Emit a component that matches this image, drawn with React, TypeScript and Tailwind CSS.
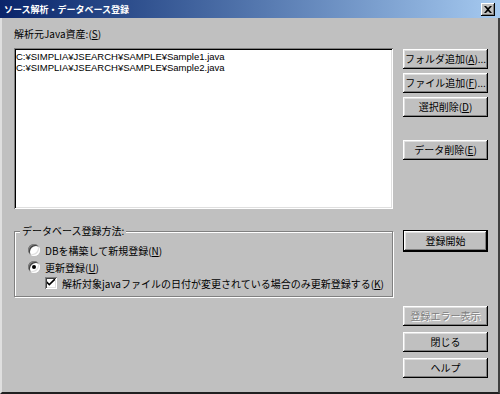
import React from "react"

const BTN =
  "h-[20px] w-[85px] flex items-center justify-center whitespace-nowrap bg-[#c0c0c0] text-[10px] leading-none text-black shadow-[inset_-1px_-1px_0_#000,inset_1px_1px_0_#fff,inset_-2px_-2px_0_#808080,inset_2px_2px_0_#dfdfdf]"

function Acc({ ch }: { ch: string }) {
  return (
    <>
      (<span className="underline underline-offset-1">{ch}</span>)
    </>
  )
}

function Button({ children, className = "", disabled = false }: { children: React.ReactNode; className?: string; disabled?: boolean }) {
  return (
    <div className={`${BTN} ${className}`}>
      <span className={disabled ? "text-[#808080] [text-shadow:1px_1px_0_#fff]" : ""}>{children}</span>
    </div>
  )
}

function Radio({ checked }: { checked?: boolean }) {
  return (
    <div className="w-[12px] h-[12px] rounded-full bg-white flex items-center justify-center shrink-0 shadow-[inset_1px_1px_0_#808080,inset_-1px_-1px_0_#fff,inset_2px_2px_0_#404040,inset_-2px_-2px_0_#dfdfdf]">
      {checked && <div className="w-[4px] h-[4px] rounded-full bg-black" />}
    </div>
  )
}

function Checkbox() {
  return (
    <div className="w-[12px] h-[12px] bg-white shrink-0 flex items-center justify-center shadow-[inset_1px_1px_0_#808080,inset_-1px_-1px_0_#fff,inset_2px_2px_0_#404040,inset_-2px_-2px_0_#dfdfdf]">
      <svg width="8" height="8" viewBox="0 0 7 7">
        <path d="M0 2 L0 4 L2 6 L7 1 L7 -1 L2 4 Z" fill="#000" />
      </svg>
    </div>
  )
}

export default function App() {
  return (
    <div className="w-[500px] h-[394px] bg-[#c0c0c0] flex flex-col overflow-hidden font-['Noto_Sans_CJK_JP',sans-serif] text-black whitespace-nowrap">
      {/* Title bar */}
      <div className="h-[18px] flex items-center justify-between bg-gradient-to-r from-[#0a246a] to-[#a6caf0] pl-[4px] pr-[5px]">
        <span className="text-white font-bold text-[9px] leading-none">ソース解析・データベース登録</span>
        <div className="w-[14px] h-[13px] bg-[#c0c0c0] flex items-center justify-center shadow-[inset_-1px_-1px_0_#000,inset_1px_1px_0_#fff,inset_-2px_-2px_0_#808080]">
          <svg width="8" height="7" viewBox="0 0 8 7">
            <path d="M0 0h2l2 2 2-2h2L5 3.5 8 7H6L4 5 2 7H0l3-3.5z" fill="#000" />
          </svg>
        </div>
      </div>

      {/* Body */}
      <div className="flex-1 flex border-l-2 border-l-[#dfdfdf] border-r-2 border-r-[#404040] border-b-2 border-b-[#202020]">
        {/* Left column */}
        <div className="ml-[12px] w-[379px] flex flex-col">
          <div className="mt-[9px] h-[14px] text-[10px] leading-[14px]">
            解析元Java資産:<Acc ch="S" />
          </div>
          <div className="mt-[7px] h-[161px] bg-white px-[2px] pt-[3px] font-['Liberation_Sans',sans-serif] text-[9.5px] leading-[11px] shadow-[inset_1px_1px_0_#808080,inset_-1px_-1px_0_#fff,inset_2px_2px_0_#000,inset_-2px_-2px_0_#dfdfdf]">
            <div className="h-[11px]">C:¥SIMPLIA¥JSEARCH¥SAMPLE¥Sample1.java</div>
            <div className="h-[11px]">C:¥SIMPLIA¥JSEARCH¥SAMPLE¥Sample2.java</div>
          </div>

          <div className="relative mt-[22px] h-[66px] border border-[#808080] shadow-[inset_1px_1px_0_#fff,1px_1px_0_#fff]">
            <div className="absolute -top-[8px] left-[5px] bg-[#c0c0c0] px-[2px] text-[10px] leading-[14px]">
              データベース登録方法:
            </div>
            <div className="mt-[11px] ml-[13px] flex items-center gap-[5px] h-[14px] text-[10px]">
              <Radio />
              <span>DBを構築して新規登録<Acc ch="N" /></span>
            </div>
            <div className="mt-[3px] ml-[13px] flex items-center gap-[5px] h-[14px] text-[10px]">
              <Radio checked />
              <span>更新登録<Acc ch="U" /></span>
            </div>
            <div className="mt-[2px] ml-[30px] flex items-center gap-[5px] h-[14px] text-[10px]">
              <Checkbox />
              <span>解析対象javaファイルの日付が変更されている場合のみ更新登録する<Acc ch="K" /></span>
            </div>
          </div>
        </div>

        {/* Right column */}
        <div className="ml-[10px] flex flex-col">
          <Button className="mt-[31px]">フォルダ追加<Acc ch="A" />...</Button>
          <Button className="mt-[4px]">ファイル追加<Acc ch="F" />...</Button>
          <Button className="mt-[4px]">選択削除<Acc ch="D" /></Button>
          <Button className="mt-[23px]">データ削除<Acc ch="E" /></Button>
          <div className="mt-[70px] w-[85px] h-[22px] border border-black">
            <Button className="!w-[83px]">登録開始</Button>
          </div>
          <Button className="mt-[54px]" disabled>登録エラー表示</Button>
          <Button className="mt-[6px]">閉じる</Button>
          <Button className="mt-[6px]">ヘルプ</Button>
        </div>
      </div>
    </div>
  )
}
